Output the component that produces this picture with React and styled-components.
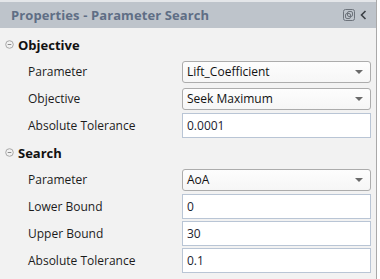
import React from 'react';
import styled, { createGlobalStyle } from 'styled-components';

const GlobalStyle = createGlobalStyle`
  html, body {
    margin: 0;
    padding: 0;
    background: #ffffff;
  }
  body {
    font-family: "Open Sans", "Noto Sans", sans-serif;
  }
`;

const Panel = styled.div`
  width: 376px;
  height: 279px;
  background: #f2f2f2;
  border-right: 1px solid #a9a9a9;
  display: flex;
  flex-direction: column;
  overflow: hidden;
`;

const TitleBar = styled.div`
  height: 26px;
  border-top: 2px solid #e4e6e9;
  background: #bec4cb;
  display: flex;
  align-items: center;
  padding: 0 9px 0 11px;
  flex: 0 0 auto;
`;

const Title = styled.div`
  flex: 1;
  font-size: 13px;
  font-weight: 700;
  color: #5f6e85;
  letter-spacing: 0.1px;
`;

const TitleIcons = styled.div`
  display: flex;
  align-items: center;
  gap: 5px;
`;

const Body = styled.div`
  padding-top: 3px;
`;

const SectionHead = styled.div`
  height: 27px;
  display: flex;
  align-items: center;
  gap: 4px;
  padding-left: 5px;
  font-size: 13px;
  font-weight: 700;
  color: #111;
`;

const Row = styled.div`
  height: 27px;
  display: grid;
  grid-template-columns: 154px 189px;
  align-items: center;
  padding-left: 28px;
`;

const Label = styled.div`
  font-size: 12px;
  color: #1c1c1c;
`;

const Dropdown = styled.div`
  height: 20px;
  border: 1px solid #acacac;
  border-radius: 3px;
  background: linear-gradient(#fdfdfd, #f6f6f6);
  display: flex;
  align-items: center;
  justify-content: space-between;
  padding: 0 7px 0 4px;
  font-size: 12px;
  color: #111;
`;

const Arrow = styled.span`
  width: 0;
  height: 0;
  border-left: 4px solid transparent;
  border-right: 4px solid transparent;
  border-top: 4px solid #6a6a6a;
`;

const Field = styled.div`
  height: 23px;
  border: 1px solid #b9c5d5;
  background: #ffffff;
  display: flex;
  align-items: center;
  padding-left: 4px;
  font-size: 12px;
  color: #1b2230;
`;

const CollapseIcon = () => (
  <svg width="9" height="9" viewBox="0 0 9 9">
    <circle cx="4.5" cy="4.5" r="3.8" fill="none" stroke="#a8a8a8" strokeWidth="1" />
    <line x1="2.7" y1="4.5" x2="6.3" y2="4.5" stroke="#8c8c8c" strokeWidth="1" />
  </svg>
);

const FloatIcon = () => (
  <svg width="12" height="12" viewBox="0 0 12 12">
    <rect x="0.5" y="0.5" width="11" height="11" rx="2" fill="none" stroke="#6d737b" />
    <rect x="2.5" y="4.5" width="5" height="5" rx="1.5" fill="none" stroke="#6d737b" />
    <rect x="4.5" y="2.5" width="5" height="5" rx="1.5" fill="none" stroke="#6d737b" />
  </svg>
);

const ChevronIcon = () => (
  <svg width="7" height="10" viewBox="0 0 7 10">
    <polyline points="5.5,1 1.5,5 5.5,9" fill="none" stroke="#3b3f45" strokeWidth="1.6" />
  </svg>
);

const sections = [
  {
    name: 'Objective',
    rows: [
      { label: 'Parameter', value: 'Lift_Coefficient', select: true },
      { label: 'Objective', value: 'Seek Maximum', select: true },
      { label: 'Absolute Tolerance', value: '0.0001' },
    ],
  },
  {
    name: 'Search',
    rows: [
      { label: 'Parameter', value: 'AoA', select: true },
      { label: 'Lower Bound', value: '0' },
      { label: 'Upper Bound', value: '30' },
      { label: 'Absolute Tolerance', value: '0.1' },
    ],
  },
];

export default function App() {
  return (
    <>
      <GlobalStyle />
      <Panel>
        <TitleBar>
          <Title>Properties - Parameter Search</Title>
          <TitleIcons>
            <FloatIcon />
            <ChevronIcon />
          </TitleIcons>
        </TitleBar>
        <Body>
          {sections.map((s) => (
            <div key={s.name}>
              <SectionHead>
                <CollapseIcon />
                {s.name}
              </SectionHead>
              {s.rows.map((r, i) => (
                <Row key={i}>
                  <Label>{r.label}</Label>
                  {r.select ? (
                    <Dropdown>
                      {r.value}
                      <Arrow />
                    </Dropdown>
                  ) : (
                    <Field>{r.value}</Field>
                  )}
                </Row>
              ))}
            </div>
          ))}
        </Body>
      </Panel>
    </>
  );
}
